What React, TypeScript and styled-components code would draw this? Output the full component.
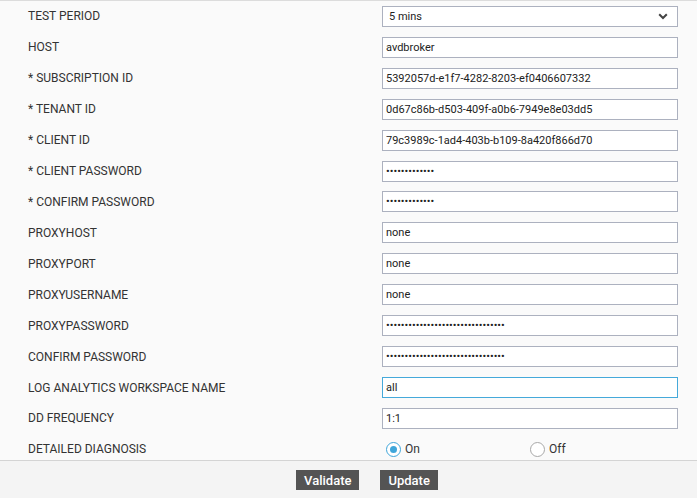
import React from 'react'
import styled, { createGlobalStyle } from 'styled-components'

const GlobalStyle = createGlobalStyle`
    html, body {
        margin: 0;
        padding: 0;
        background: #fafafa;
        font-family: Roboto, 'Liberation Sans', Arial, sans-serif;
    }
`

interface IField {
    label: string
    value: string
    kind?: 'text' | 'password' | 'select' | 'radio'
    focused?: boolean
}

const fields: IField[] = [
    { label: 'TEST PERIOD', value: '5 mins', kind: 'select' },
    { label: 'HOST', value: 'avdbroker' },
    { label: '* SUBSCRIPTION ID', value: '5392057d-e1f7-4282-8203-ef0406607332' },
    { label: '* TENANT ID', value: '0d67c86b-d503-409f-a0b6-7949e8e03dd5' },
    { label: '* CLIENT ID', value: '79c3989c-1ad4-403b-b109-8a420f866d70' },
    { label: '* CLIENT PASSWORD', value: 'xxxxxxxxxxxxx', kind: 'password' },
    { label: '* CONFIRM PASSWORD', value: 'xxxxxxxxxxxxx', kind: 'password' },
    { label: 'PROXYHOST', value: 'none' },
    { label: 'PROXYPORT', value: 'none' },
    { label: 'PROXYUSERNAME', value: 'none' },
    { label: 'PROXYPASSWORD', value: 'xxxxxxxxxxxxxxxxxxxxxxxxxxxxxxxx', kind: 'password' },
    { label: 'CONFIRM PASSWORD', value: 'xxxxxxxxxxxxxxxxxxxxxxxxxxxxxxxx', kind: 'password' },
    { label: 'LOG ANALYTICS WORKSPACE NAME', value: 'all', focused: true },
    { label: 'DD FREQUENCY', value: '1:1' },
    { label: 'DETAILED DIAGNOSIS', value: 'On', kind: 'radio' },
]

export default function App() {
    return <Page>
        <GlobalStyle />
        <FormArea>
            {fields.map((field, index) => <Row key={index}>
                <Label>{field.label}</Label>
                {renderControl(field)}
            </Row>)}
        </FormArea>
        <Footer>
            <ActionButton>Validate</ActionButton>
            <ActionButton>Update</ActionButton>
        </Footer>
    </Page>
}

function renderControl(field: IField) {
    if (field.kind === 'select') {
        return <SelectBox>
            <span>{field.value}</span>
            <svg width="10" height="7" viewBox="0 0 10 7">
                <path d="M1.2 1.2 L5 5 L8.8 1.2" fill="none" stroke="#444" strokeWidth="2" />
            </svg>
        </SelectBox>
    }
    if (field.kind === 'radio') {
        return <RadioGroup>
            <RadioOption>
                <RadioCircle checked />
                <span>On</span>
            </RadioOption>
            <RadioOption>
                <RadioCircle />
                <span>Off</span>
            </RadioOption>
        </RadioGroup>
    }
    return <TextInput
        type={field.kind === 'password' ? 'password' : 'text'}
        value={field.value}
        readOnly
        focused={field.focused}
    />
}

const Page = styled.div`
    width: 697px;
    height: 498px;
    display: flex;
    flex-direction: column;
    overflow: hidden;
    background: #fafafa;
`

const FormArea = styled.div`
    height: 459px;
    flex-shrink: 0;
    overflow: hidden;
    border-top: 1px solid #dcdcdc;
    border-bottom: 1px solid #d4d4d4;
`

const Row = styled.div`
    display: grid;
    grid-template-columns: 354px 296px;
    align-items: center;
    height: 30.93px;
    padding-left: 28px;
`

const Label = styled.div`
    font-size: 12px;
    color: #333;
    white-space: nowrap;
`

const TextInput = styled.input<{ focused?: boolean }>`
    box-sizing: border-box;
    width: 296px;
    height: 21px;
    margin: 0;
    padding: 0 3px;
    border: 1px solid ${p => p.focused ? '#45a9da' : '#acb1bf'};
    background: #fff;
    font-family: Roboto, 'Liberation Sans', Arial, sans-serif;
    font-size: 11px;
    color: #222;
    outline: none;
`

const SelectBox = styled.div`
    box-sizing: border-box;
    width: 296px;
    height: 21px;
    display: flex;
    align-items: center;
    justify-content: space-between;
    padding: 0 9px 0 6px;
    border: 1px solid #acb1bf;
    background: #fff;
    font-size: 11px;
    color: #222;
`

const RadioGroup = styled.div`
    display: grid;
    grid-template-columns: 144px 1fr;
    padding-left: 4px;
`

const RadioOption = styled.div`
    display: flex;
    align-items: center;
    gap: 4px;
    font-size: 12px;
    color: #333;
`

const RadioCircle = styled.span<{ checked?: boolean }>`
    box-sizing: border-box;
    width: 15px;
    height: 15px;
    border-radius: 50%;
    border: 1px solid ${p => p.checked ? '#3fa6da' : '#a8a8a8'};
    background: #fff;
    display: flex;
    align-items: center;
    justify-content: center;

    &::after {
        content: '';
        width: 7px;
        height: 7px;
        border-radius: 50%;
        background: ${p => p.checked ? '#3fa6da' : 'transparent'};
    }
`

const Footer = styled.div`
    flex: 1;
    display: flex;
    justify-content: center;
    align-items: center;
    gap: 21px;
    background: #f4f4f4;
    padding-left: 37px;
    padding-top: 1px;
`

const ActionButton = styled.button`
    height: 20px;
    padding: 0 8px;
    border: none;
    background: #545454;
    color: #fff;
    font-family: Roboto, 'Liberation Sans', Arial, sans-serif;
    font-size: 13px;
    font-weight: 500;
    cursor: pointer;
`
